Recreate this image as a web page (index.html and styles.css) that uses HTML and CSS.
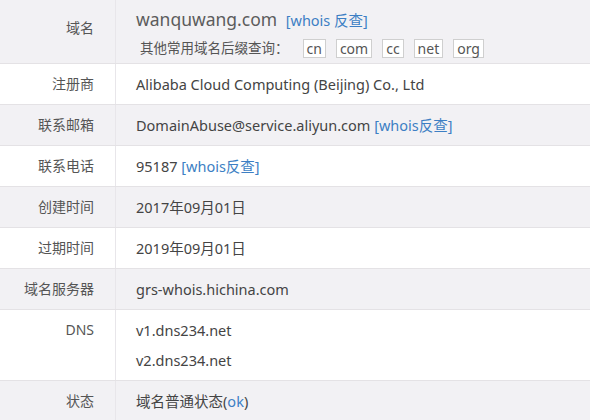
FILE: index.html
```html
<!DOCTYPE html>
<html lang="zh-CN">
<head>
<meta charset="utf-8">
<title>whois</title>
<link rel="stylesheet" href="styles.css">
</head>
<body>
<div class="table">
  <div class="row gray first">
    <div class="label">域名</div>
    <div class="value">
      <div class="domain">wanquwang.com <a class="link small">[whois 反查]</a></div>
      <div class="suffixes">
        <span class="suffix-title">其他常用域名后缀查询：</span>
        <span class="tag">cn</span><span class="tag">com</span><span class="tag">cc</span><span class="tag">net</span><span class="tag">org</span>
      </div>
    </div>
  </div>
  <div class="row">
    <div class="label">注册商</div>
    <div class="value">Alibaba Cloud Computing (Beijing) Co., Ltd</div>
  </div>
  <div class="row gray">
    <div class="label">联系邮箱</div>
    <div class="value">DomainAbuse@service.aliyun.com <a class="link">[whois反查]</a></div>
  </div>
  <div class="row">
    <div class="label">联系电话</div>
    <div class="value">95187 <a class="link">[whois反查]</a></div>
  </div>
  <div class="row gray">
    <div class="label">创建时间</div>
    <div class="value">2017年09月01日</div>
  </div>
  <div class="row">
    <div class="label">过期时间</div>
    <div class="value">2019年09月01日</div>
  </div>
  <div class="row gray">
    <div class="label">域名服务器</div>
    <div class="value">grs-whois.hichina.com</div>
  </div>
  <div class="row">
    <div class="label">DNS</div>
    <div class="value">v1.dns234.net<br>v2.dns234.net</div>
  </div>
  <div class="row gray">
    <div class="label">状态</div>
    <div class="value">域名普通状态(<a class="link">ok</a>)</div>
  </div>
</div>
</body>
</html>
```

FILE: styles.css
```css
html, body {
  margin: 0;
  padding: 0;
  background: #ffffff;
}
body {
  font-family: "Noto Sans", "Noto Sans CJK SC", sans-serif;
  color: #444;
  width: 590px;
  height: 420px;
  overflow: hidden;
}
.table {
  display: flex;
  flex-direction: column;
}
.row {
  display: grid;
  grid-template-columns: 116px 1fr;
  border-bottom: 1px solid #e4e2e5;
  background: #ffffff;
}
.row.gray {
  background: #f2f1f4;
}
.label {
  border-right: 1px solid #e8e6ea;
  text-align: right;
  padding: 5px 21px 5px 0;
  font-size: 14px;
  line-height: 30px;
  color: #555;
}
.value {
  padding: 5px 0 5px 20px;
  font-size: 14.5px;
  line-height: 30px;
  color: #444;
}
.link {
  color: #3d7fc4;
}
.first {
  height: 63px;
}
.first .label {
  padding-top: 13px;
}
.first .value {
  padding-top: 4px;
  padding-bottom: 0;
}
.domain {
  font-size: 17.5px;
  line-height: 30px;
  height: 30px;
  color: #5c5c5c;
}
.domain .small {
  font-size: 14.5px;
  line-height: 1;
  margin-left: 4px;
}
.suffixes {
  display: flex;
  align-items: center;
  margin-top: 5px;
  padding-left: 4px;
  height: 19px;
}
.suffix-title {
  font-size: 13.5px;
  line-height: 19px;
  color: #555;
  margin-right: 14px;
}
.tag {
  display: inline-block;
  border: 1px solid #cfcfcf;
  background: #fff;
  font-size: 14px;
  line-height: 17px;
  padding: 0 3px;
  margin-right: 10px;
  color: #555;
}
```
